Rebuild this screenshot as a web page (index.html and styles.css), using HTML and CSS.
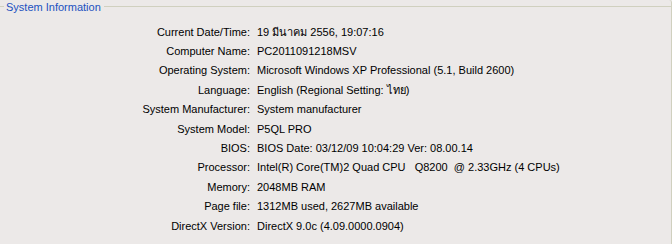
FILE: index.html
```html
<!DOCTYPE html>
<html lang="th">
<head>
    <meta charset="UTF-8">
    <title>System Information</title>
    <link rel="stylesheet" href="styles.css">
</head>
<body>

<div class="group">
    <div class="group-head">
        <span class="line-short"></span>
        <span class="group-title">System Information</span>
        <span class="line-long"></span>
    </div>
    <div class="info">
        <div class="label">Current Date/Time:</div><div class="value">19 มีนาคม 2556, 19:07:16</div>
        <div class="label">Computer Name:</div><div class="value">PC2011091218MSV</div>
        <div class="label">Operating System:</div><div class="value">Microsoft Windows XP Professional (5.1, Build 2600)</div>
        <div class="label">Language:</div><div class="value">English (Regional Setting: ไทย)</div>
        <div class="label">System Manufacturer:</div><div class="value">System manufacturer</div>
        <div class="label">System Model:</div><div class="value">P5QL PRO</div>
        <div class="label">BIOS:</div><div class="value">BIOS Date: 03/12/09 10:04:29 Ver: 08.00.14</div>
        <div class="label">Processor:</div><div class="value pre">Intel(R) Core(TM)2 Quad CPU   Q8200  @ 2.33GHz (4 CPUs)</div>
        <div class="label">Memory:</div><div class="value">2048MB RAM</div>
        <div class="label">Page file:</div><div class="value">1312MB used, 2627MB available</div>
        <div class="label">DirectX Version:</div><div class="value">DirectX 9.0c (4.09.0000.0904)</div>
    </div>
</div>

</body>
</html>
```

FILE: styles.css
```css
body {
    margin: 0;
    background-color: #ECE9E8;
    font-family: 'Liberation Sans', 'Noto Sans', sans-serif;
    font-size: 11px;
    color: #000;
}

.group {
    width: 672px;
    height: 244px;
    border-right: 1px solid #D0D0BF;
    border-top-right-radius: 3px;
    box-sizing: border-box;
}

.group-head {
    display: flex;
    align-items: center;
    height: 13px;
}

.line-short {
    width: 4px;
    border-top: 1px solid #D0D0BF;
}

.line-long {
    flex: 1;
    border-top: 1px solid #D0D0BF;
}

.group-title {
    color: #2151C0;
    padding: 0 3px 0 2px;
}

.info {
    display: grid;
    grid-template-columns: 250px auto;
    column-gap: 7px;
    grid-auto-rows: 19.4px;
    align-items: center;
    margin-top: 9px;
}

.label {
    text-align: right;
}

.value {
    white-space: nowrap;
}

.pre {
    white-space: pre;
}
```
